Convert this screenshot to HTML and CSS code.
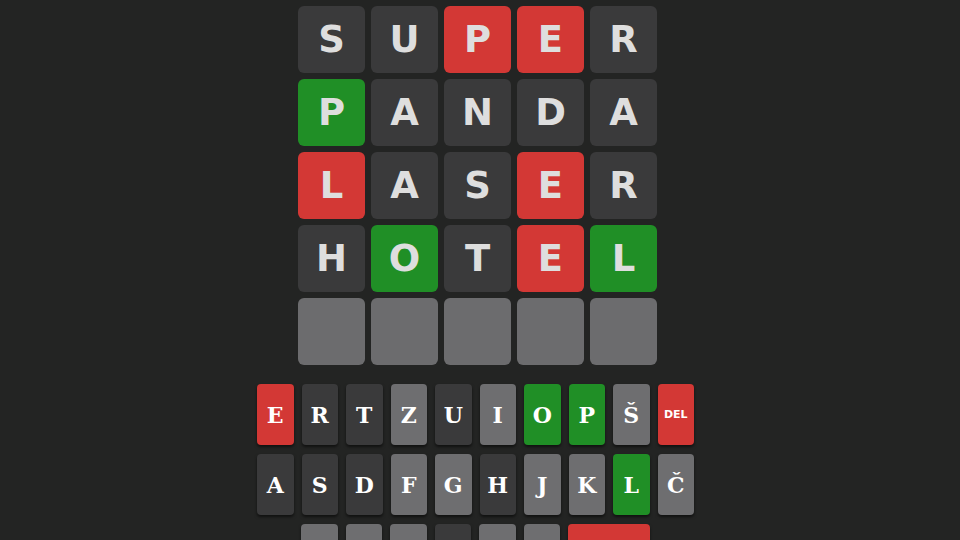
FILE: index.html
```html
<!DOCTYPE html>
<html lang="sl">
<head>
  <meta charset="UTF-8">
  <title>Besedle</title>
  <link rel="stylesheet" href="styles.css">
</head>
<body>
  <div id="app">
    <div id="board">
      <div class="tile">S</div><div class="tile">U</div><div class="tile red">P</div><div class="tile red">E</div><div class="tile">R</div>
      <div class="tile green">P</div><div class="tile">A</div><div class="tile">N</div><div class="tile">D</div><div class="tile">A</div>
      <div class="tile red">L</div><div class="tile">A</div><div class="tile">S</div><div class="tile red">E</div><div class="tile">R</div>
      <div class="tile">H</div><div class="tile green">O</div><div class="tile">T</div><div class="tile red">E</div><div class="tile green">L</div>
      <div class="tile empty"></div><div class="tile empty"></div><div class="tile empty"></div><div class="tile empty"></div><div class="tile empty"></div>
    </div>

    <div id="keyboard">
      <div class="row">
        <button class="key red">E</button>
        <button class="key used">R</button>
        <button class="key used">T</button>
        <button class="key">Z</button>
        <button class="key used">U</button>
        <button class="key">I</button>
        <button class="key green">O</button>
        <button class="key green">P</button>
        <button class="key">Š</button>
        <button class="key red small">DEL</button>
      </div>
      <div class="row">
        <button class="key used">A</button>
        <button class="key used">S</button>
        <button class="key used">D</button>
        <button class="key">F</button>
        <button class="key">G</button>
        <button class="key used">H</button>
        <button class="key">J</button>
        <button class="key">K</button>
        <button class="key green">L</button>
        <button class="key">Č</button>
      </div>
      <!-- spodnja vrsta je odrezana, oznake niso vidne -->
      <div class="row">
        <button class="key" aria-label="Ž"></button>
        <button class="key" aria-label="C"></button>
        <button class="key" aria-label="V"></button>
        <button class="key used" aria-label="B"></button>
        <button class="key" aria-label="N"></button>
        <button class="key" aria-label="M"></button>
        <button class="key red wide" aria-label="ENTER"></button>
      </div>
    </div>
  </div>
</body>
</html>
```

FILE: styles.css
```css
body {
  margin: 0;
  background: #232423;
  font-family: "DejaVu Sans", sans-serif;
  overflow: hidden;
}
#app {
  display: flex;
  flex-direction: column;
  align-items: center;
  padding-top: 6px;
}
#board {
  display: grid;
  grid-template-columns: repeat(5, 67px);
  grid-auto-rows: 67px;
  gap: 6px;
  margin-right: 5px;
}
.tile {
  background: #3a3a3b;
  border-radius: 6px;
  color: #dedede;
  font-weight: bold;
  font-size: 37px;
  display: flex;
  align-items: center;
  justify-content: center;
}
.tile.red { background: #d33835; }
.tile.green { background: #208f26; }
.tile.empty { background: #6c6c6e; }

#keyboard {
  margin-top: 19px;
  margin-right: 9px;
  display: flex;
  flex-direction: column;
  align-items: center;
  gap: 9px;
}
.row {
  display: flex;
  gap: 8px;
}
.key {
  width: 36.5px;
  height: 61px;
  border: none;
  border-radius: 4px;
  background: #6e6e70;
  color: #fff;
  font-family: "DejaVu Serif", serif;
  font-weight: bold;
  font-size: 22px;
  padding: 0;
  box-shadow: 0 2px 3px rgba(0, 0, 0, 0.55);
}
.key.used { background: #3a3a3b; }
.key.red { background: #d33835; }
.key.green { background: #208f26; }
.key.small {
  font-family: "DejaVu Sans", sans-serif;
  font-size: 11px;
}
.key.wide { width: 82px; }
```
